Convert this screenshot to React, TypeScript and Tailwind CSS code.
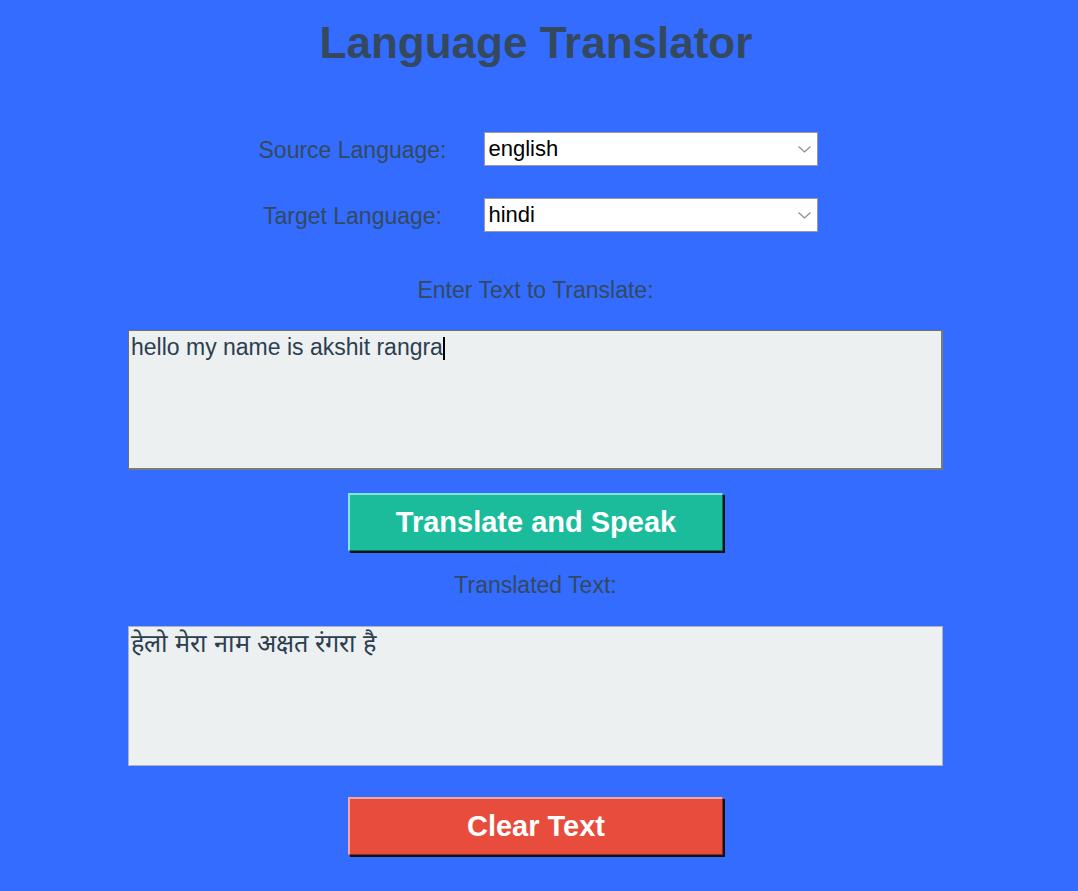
import React, { useState } from 'react'

const languages = ['english', 'hindi', 'french', 'spanish', 'german']

const Chevron = () => (
    <svg width="13" height="7" viewBox="0 0 13 7" fill="none" className="shrink-0">
        <path d="M0.5 0.5L6.5 6L12.5 0.5" stroke="#8a8a8a" strokeWidth="1.1" />
    </svg>
)

interface LangSelectProps {
    label: string;
    value: string;
}

const LangRow: React.FC<LangSelectProps> = ({ label, value }) => (
    <>
        <div className="h-[34px] flex items-center justify-center pt-[3px] text-[23px] text-[#34495e] whitespace-nowrap">
            {label}
        </div>
        <div className="h-[34px] w-[334px] bg-white border border-[#9a9a9a] flex items-center justify-between pl-[4px] pr-[6px]">
            <span className="text-[22px] text-black leading-none">{value}</span>
            <Chevron />
        </div>
    </>
)

const App: React.FC = () => {
    const [source] = useState(languages[0])
    const [target] = useState(languages[1])
    const [input] = useState('hello my name is akshit rangra')
    const [output] = useState('हेलो मेरा नाम अक्षत रंगरा है')

    return (
        <div className="min-h-screen bg-[#336cff] flex flex-col items-center font-['Liberation_Sans',Arial,sans-serif] pb-10">
            <h1 className="mt-[21px] text-[44px] leading-none font-bold text-[#34495e] ml-[-6px]">
                Language Translator
            </h1>

            <div className="mt-[67px] grid grid-cols-[192px_334px] gap-x-[35px] gap-y-[32px] ml-[-4px]">
                <LangRow label="Source Language:" value={source} />
                <LangRow label="Target Language:" value={target} />
            </div>

            <p className="mt-[45px] h-[26px] leading-[26px] text-[23px] text-[#34495e] ml-[-7px]">Enter Text to Translate:</p>

            <div className="mt-[27px] w-[815px] h-[140px] bg-[#ecf0f1] border border-[#6f6f6f] border-r-2 border-b-2 border-r-[#7a7a7a] border-b-[#7a7a7a] px-[2px] pt-[3px] text-[23px] text-[#2c3e50] leading-[26px] ml-[-7px]">
                {input}
                <span className="inline-block w-[2.5px] h-[23px] bg-black align-[-5px]" />
            </div>

            <button className="mt-[23px] w-[375px] h-[58px] bg-[#1abc9c] border-t-2 border-l-2 border-t-[#86e6d3] border-l-[#86e6d3] border-b border-r border-b-[#0e6b58] border-r-[#0e6b58] shadow-[2px_2px_0_#111] text-white font-bold text-[29px] leading-none ml-[-7px]">
                Translate and Speak
            </button>

            <p className="mt-[21px] h-[26px] leading-[26px] text-[23px] text-[#34495e] ml-[-7px]">Translated Text:</p>

            <div className="mt-[28px] w-[815px] h-[140px] bg-[#ecf0f1] border border-[#aab4c8] px-[2px] pt-[1px] text-[25.3px] text-[#2c3e50] leading-[30px] ml-[-7px]">
                {output}
            </div>

            <button className="mt-[31px] w-[375px] h-[58px] bg-[#e74c3c] border-t-2 border-l-2 border-t-[#f2a79f] border-l-[#f2a79f] border-b border-r border-b-[#8c2a1f] border-r-[#8c2a1f] shadow-[2px_2px_0_#111] text-white font-bold text-[29px] leading-none ml-[-7px]">
                Clear Text
            </button>
        </div>
    )
}

export default App
